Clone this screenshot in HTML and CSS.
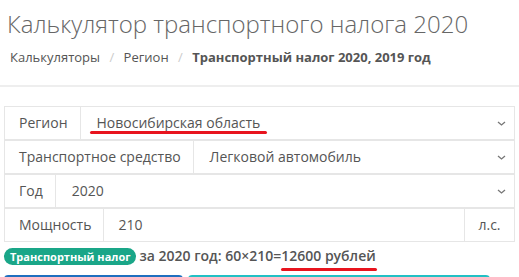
FILE: index.html
```html
<!DOCTYPE html>
<html lang="ru">
<head>
    <meta charset="UTF-8">
    <meta name="viewport" content="width=device-width, initial-scale=1.0">
    <title>Калькулятор транспортного налога 2020</title>
    <link rel="stylesheet" href="styles.css">
</head>
<body>
    <div class="head">
        <h1>Калькулятор транспортного налога 2020</h1>
        <div class="crumbs">
            <a href="#">Калькуляторы</a>
            <span class="sep">/</span>
            <a href="#">Регион</a>
            <span class="sep">/</span>
            <b>Транспортный налог 2020, 2019 год</b>
        </div>
    </div>
    <hr class="rule">

    <div class="calc">
        <div class="row">
            <div class="label">Регион</div>
            <div class="field">
                <span class="mark">Новосибирская область</span>
                <svg class="chev" width="9" height="5" viewBox="0 0 9 5"><path d="M1 1l3.5 3L8 1" fill="none" stroke="#777" stroke-width="1.3"/></svg>
            </div>
        </div>
        <div class="row">
            <div class="label">Транспортное средство</div>
            <div class="field">
                <span>Легковой автомобиль</span>
                <svg class="chev" width="9" height="5" viewBox="0 0 9 5"><path d="M1 1l3.5 3L8 1" fill="none" stroke="#777" stroke-width="1.3"/></svg>
            </div>
        </div>
        <div class="row">
            <div class="label">Год</div>
            <div class="field">
                <span>2020</span>
                <svg class="chev" width="9" height="5" viewBox="0 0 9 5"><path d="M1 1l3.5 3L8 1" fill="none" stroke="#777" stroke-width="1.3"/></svg>
            </div>
        </div>
        <div class="row">
            <div class="label">Мощность</div>
            <div class="field input">210</div>
            <div class="addon">л.с.</div>
        </div>
    </div>

    <div class="result">
        <span class="badge">Транспортный налог</span>
        <span>за 2020 год: 60×210=<span class="mark">12600 рублей</span></span>
    </div>

    <div class="buttons">
        <a href="#" class="btn btn-blue">&nbsp;</a>
        <a href="#" class="btn btn-teal">&nbsp;</a>
    </div>
</body>
</html>
```

FILE: styles.css
```css
* {
    box-sizing: border-box;
}
body {
    margin: 0;
    font-family: "Open Sans", "Liberation Sans", sans-serif;
    color: #555;
    background: #fff;
    height: 277px;
    overflow: hidden;
}
.head {
    padding: 0 7px;
}
h1 {
    margin: 0;
    padding-top: 7px;
    font-size: 24px;
    font-weight: 300;
    line-height: 34px;
    color: #666;
    white-space: nowrap;
}
.crumbs {
    margin-top: 6px;
    padding-left: 3px;
    font-size: 13px;
    line-height: 20px;
}
.crumbs a {
    color: #555;
    text-decoration: none;
}
.crumbs .sep {
    color: #ccc;
    padding: 0 6px;
}
.crumbs b {
    font-weight: 700;
}
.rule {
    border: none;
    border-top: 2px solid #eee;
    margin: 18px 0 0;
}
.calc {
    margin: 19px 4px 0;
}
.row {
    display: flex;
    height: 34px;
    border: 1px solid #e6e6e6;
    font-size: 14px;
    line-height: 32px;
}
.label {
    padding: 0 12px 0 14px;
    border-right: 1px solid #e6e6e6;
    white-space: nowrap;
}
.field {
    flex: 1;
    display: flex;
    align-items: center;
    padding: 0 8px 0 16px;
}
.field span {
    line-height: 20px;
}
.field .chev {
    margin-left: auto;
}
.field.input {
    padding-left: 14px;
}
.addon {
    width: 50px;
    text-align: center;
    border-left: 1px solid #e6e6e6;
}
.mark {
    position: relative;
}
.mark::after {
    content: "";
    position: absolute;
    left: -7px;
    right: -7px;
    bottom: -1px;
    height: 3px;
    border-radius: 2px;
    background: #e8141e;
}
.result {
    margin: 5px 4px 0;
    display: flex;
    align-items: center;
    gap: 3px;
    font-size: 14px;
    font-weight: 600;
    line-height: 18px;
    white-space: nowrap;
}
.result .mark::after {
    left: 0;
    right: -1px;
    bottom: -6px;
}
.badge {
    background: #1aa688;
    color: #fff;
    font-size: 11px;
    font-weight: 700;
    line-height: 17px;
    padding: 0 6px;
    border-radius: 9px;
}
.buttons {
    display: flex;
    gap: 5px;
    margin: 10px 4px 0;
}
.btn {
    display: block;
    height: 34px;
    border-radius: 4px;
    text-decoration: none;
}
.btn-blue {
    width: 179px;
    background: #1f6fbf;
}
.btn-teal {
    width: 302px;
    background: #22c0c4;
}
```
